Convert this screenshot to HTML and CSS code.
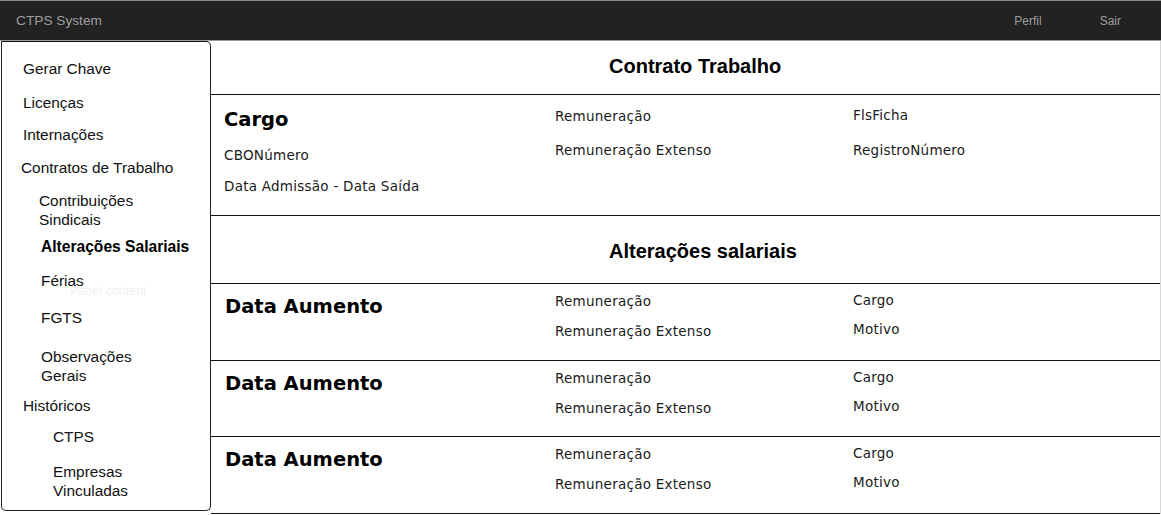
FILE: index.html
```html
<!DOCTYPE html>
<html lang="pt">
<head>
<meta charset="utf-8">
<title>CTPS System</title>
<link rel="stylesheet" href="styles.css">
</head>
<body>
<header class="navbar">
  <span class="brand">CTPS System</span>
  <nav class="nav-links">
    <a class="nav-link nav-perfil">Perfil</a>
    <a class="nav-link">Sair</a>
  </nav>
</header>
<div class="layout">
  <aside class="sidebar">
    <span class="ghost">Panel content</span>
    <a class="item lvl0">Gerar Chave</a>
    <a class="item lvl0 g15">Licenças</a>
    <a class="item lvl0 g13">Internações</a>
    <a class="item lvl0b g14">Contratos de Trabalho</a>
    <a class="item lvl1 g14">Contribuições<br>Sindicais</a>
    <a class="item lvl1b g8 active">Alterações Salariais</a>
    <a class="item lvl1b g15">Férias</a>
    <a class="item lvl1b g18">FGTS</a>
    <a class="item lvl1b g20">Observações<br>Gerais</a>
    <a class="item lvl0 g11">Históricos</a>
    <a class="item lvl2 g12">CTPS</a>
    <a class="item lvl2 g16">Empresas<br>Vinculadas</a>
  </aside>
  <main class="main">
    <div class="head head-1">Contrato Trabalho</div>
    <section class="contract">
      <div class="col col-a">
        <div class="big">Cargo</div>
        <div class="txt">CBONúmero</div>
        <div class="txt">Data Admissão - Data Saída</div>
      </div>
      <div class="col col-b">
        <div class="txt">Remuneração</div>
        <div class="txt">Remuneração Extenso</div>
      </div>
      <div class="col col-c">
        <div class="txt">FlsFicha</div>
        <div class="txt">RegistroNúmero</div>
      </div>
    </section>
    <div class="head head-2">Alterações salariais</div>
    <section class="raise">
      <div class="col col-a"><div class="big">Data Aumento</div></div>
      <div class="col col-b"><div class="txt">Remuneração</div><div class="txt">Remuneração Extenso</div></div>
      <div class="col col-c"><div class="txt">Cargo</div><div class="txt">Motivo</div></div>
    </section>
    <section class="raise raise-mid">
      <div class="col col-a"><div class="big">Data Aumento</div></div>
      <div class="col col-b"><div class="txt">Remuneração</div><div class="txt">Remuneração Extenso</div></div>
      <div class="col col-c"><div class="txt">Cargo</div><div class="txt">Motivo</div></div>
    </section>
    <section class="raise">
      <div class="col col-a"><div class="big">Data Aumento</div></div>
      <div class="col col-b"><div class="txt">Remuneração</div><div class="txt">Remuneração Extenso</div></div>
      <div class="col col-c"><div class="txt">Cargo</div><div class="txt">Motivo</div></div>
    </section>
  </main>
</div>
</body>
</html>
```
FILE: styles.css
```css
* { box-sizing: border-box; }
html, body { margin: 0; padding: 0; background: #fff; }
body { font-family: "Liberation Sans", Arial, sans-serif; color: #111; }

.navbar {
  height: 41px;
  background: #222;
  border-top: 1px solid #8a8a8a;
  border-bottom: 1px solid #9a9a9a;
  display: flex;
  align-items: center;
  justify-content: space-between;
  padding: 0 0 0 16px;
}
.brand { font-size: 13.7px; color: #9d9d9d; }
.nav-links { display: flex; align-items: center; padding-right: 40px; }
.nav-link { font-size: 12px; color: #9d9d9d; }
.nav-perfil { margin-right: 58px; }

.layout { display: flex; align-items: flex-start; }

.sidebar {
  position: relative;
  width: 210px;
  height: 470px;
  margin-left: 1px;
  border: 1px solid #222;
  border-top-color: #111;
  border-radius: 0 5px 5px 5px;
  display: flex;
  flex-direction: column;
  padding-top: 17px;
}
.ghost {
  position: absolute;
  left: 68px;
  top: 242px;
  font-size: 12.5px;
  color: #efefef;
}
.item {
  display: block;
  font-size: 15.4px;
  line-height: 19px;
  color: #111;
  position: relative;
}
.lvl0 { padding-left: 21px; }
.lvl0b { padding-left: 19px; }
.lvl1 { padding-left: 37px; }
.lvl1b { padding-left: 39px; }
.lvl2 { padding-left: 51px; }
.active { font-weight: bold; font-size: 15.6px; color: #000; }
.g8 { margin-top: 8px; }
.g11 { margin-top: 11px; }
.g12 { margin-top: 12px; }
.g13 { margin-top: 13px; }
.g14 { margin-top: 14px; }
.g15 { margin-top: 15px; }
.g16 { margin-top: 16px; }
.g18 { margin-top: 18px; }
.g20 { margin-top: 20px; }

.main {
  flex: 1;
  border-right: 1px solid #d8d8d8;
  min-height: 473px;
}
.head {
  text-align: left;
  padding-left: 398px;
  font-weight: bold;
  font-size: 20px;
  color: #000;
  border-bottom: 1px solid #111;
  line-height: 24px;
}
.head-1 { height: 54px; padding-top: 13px; }
.head-2 { height: 68px; padding-top: 23px; }

.contract, .raise {
  display: grid;
  grid-template-columns: 331px 298px 1fr;
  padding-left: 13px;
  border-bottom: 1px solid #111;
}
.contract { height: 121px; }
.raise { height: 77px; }
.raise-mid { height: 76px; }

.col { display: flex; flex-direction: column; }
.big {
  font-family: "DejaVu Sans", Verdana, sans-serif;
  font-weight: bold;
  font-size: 19.5px;
  line-height: 24px;
  color: #000;
}
.txt {
  font-family: "DejaVu Sans", Verdana, sans-serif;
  font-size: 13.5px;
  letter-spacing: 0.25px;
  line-height: 16px;
  color: #1a1a1a;
}

.contract .col-a { padding-top: 13px; gap: 15px; }
.contract .col-b { padding-top: 13px; gap: 18px; }
.contract .col-c { padding-top: 12px; gap: 19px; }

.raise .col-a { padding-top: 11px; padding-left: 1px; }
.raise .col-b { padding-top: 9px; gap: 14px; }
.raise .col-c { padding-top: 8px; gap: 13px; }
```
